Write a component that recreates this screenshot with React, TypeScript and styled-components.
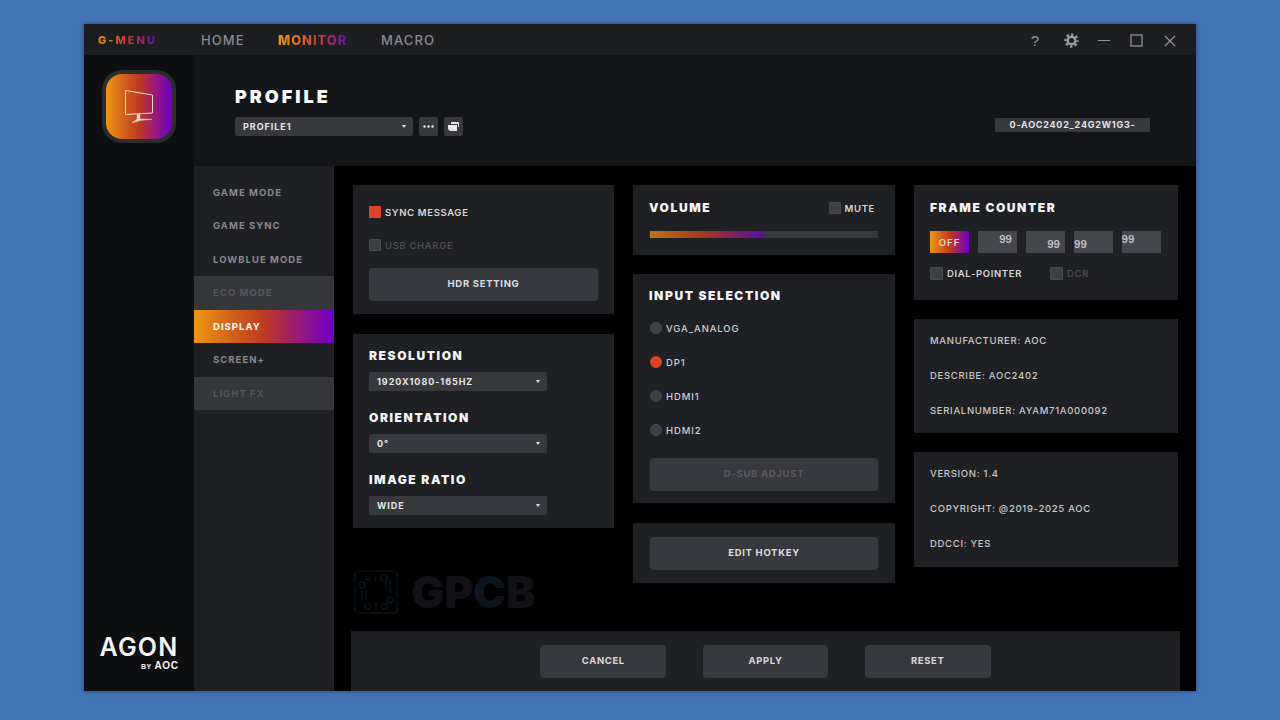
import React from "react";
import styled, { createGlobalStyle } from "styled-components";

const grad = "linear-gradient(90deg,#ee9714 0%,#d0601a 28%,#bf3a20 50%,#98187a 75%,#6c00c8 100%)";
const sans = `"Inter","Open Sans","Liberation Sans",sans-serif`;

const Global = createGlobalStyle`
  html, body { margin: 0; padding: 0; width: 1280px; height: 720px; overflow: hidden; background: #4273b4; }
  * { box-sizing: border-box; }
  body { font-family: ${sans}; }
`;
const Page = styled.div`
  width: 1280px; height: 720px; padding: 24px 84px 29px;
`;
const Window = styled.div`
  width: 1112px; height: 667px; display: flex; flex-direction: column; background: #000;
  box-shadow: 0 0 4px rgba(20,40,80,.6);
`;
const TitleBar = styled.div`
  height: 31px; flex: none; background: #1d1e22; display: flex; align-items: center; padding: 0 10px 0 14px;
`;
const Brand = styled.div`
  font-size: 11px; font-weight: 800; letter-spacing: 2px; width: 103px;
  span { background: linear-gradient(90deg,#e8951a,#c33a30 50%,#6c10b0); -webkit-background-clip: text; background-clip: text; color: transparent; }
`;
const TopLink = styled.div<{ $active?: boolean; $w: number }>`
  width: ${p => p.$w}px; font-size: 13px; letter-spacing: ${p => (p.$active ? 0.9 : 1.1)}px;
  font-weight: ${p => (p.$active ? 800 : 500)};
  color: #8a8b90;
  span { ${p => p.$active && `background: linear-gradient(90deg,#ee9714,#d2602a 40%,#c8402a 55%,#6c10b0); -webkit-background-clip: text; background-clip: text; color: transparent;`} }
`;
const WinIcons = styled.div`
  margin-left: auto; display: flex; align-items: center; color: #9a9ba0; padding-top: 2px;
`;
const WinBtn = styled.div<{ $w: number }>`
  width: ${p => p.$w}px; display: flex; justify-content: center; align-items: center;
`;
const Body = styled.div`
  flex: 1; min-height: 0; display: flex;
`;
const Side = styled.div`
  width: 110px; flex: none; background: #0e0f11; display: flex; flex-direction: column; align-items: center; padding: 15px 0 20px;
`;
const Tile = styled.div`
  width: 74px; height: 73px; border-radius: 20px; background: #2b2c30; padding: 4px;
`;
const TileInner = styled.div`
  width: 66px; height: 65px; border-radius: 16px; background: ${grad}; display: flex; align-items: center; justify-content: center;
`;
const Logo = styled.div`
  margin-top: auto; width: 80px; color: #f4f4f4; display: flex; flex-direction: column; align-items: flex-end; margin-left: 1px;
`;
const LogoMain = styled.div`
  font-family: "Inter", sans-serif; font-size: 25px; line-height: 18px; height: 18px; font-weight: 600; letter-spacing: 1.2px; width: 80px; white-space: nowrap; margin-bottom: 5px;
`;
const LogoSub = styled.div`
  font-family: "Liberation Sans", sans-serif; font-size: 10px; line-height: 10px; height: 10px; font-weight: 700; letter-spacing: .6px; white-space: nowrap; margin-right: 1px;
  small { font-size: 7px; margin-right: 3px; letter-spacing: .4px; }
`;
const Right = styled.div`
  flex: 1; min-width: 0; display: flex; flex-direction: column;
`;
const Header = styled.div`
  height: 111px; flex: none; background: #141518; padding: 32px 46px 0 41px; display: flex; justify-content: space-between;
`;
const HeaderLeft = styled.div`
  display: flex; flex-direction: column;
`;
const PageTitle = styled.div`
  font-size: 18px; line-height: 20px; font-weight: 900; color: #fff; letter-spacing: 3px;
`;
const ProfileRow = styled.div`
  display: flex; gap: 6px; margin-top: 10px;
`;
const Select = styled.div<{ $w: number }>`
  width: ${p => p.$w}px; height: 19px; background: #38393e; border-radius: 2px; display: flex; align-items: center; justify-content: space-between;
  padding: 0 7px 0 8px; font-size: 9px; font-weight: 700; color: #e6e6e8; letter-spacing: .95px;
`;
const Caret = styled.span`
  width: 0; height: 0; border-left: 2.5px solid transparent; border-right: 2.5px solid transparent; border-top: 3.5px solid #e4e4e6;
`;
const SquareBtn = styled.div`
  width: 19px; height: 19px; background: #38393e; border-radius: 2px; display: flex; align-items: center; justify-content: center;
`;
const Monitor = styled.div`
  width: 155px; height: 14px; background: #38393e; border-radius: 1px; margin-top: 31px; text-align: center;
  font-size: 9px; line-height: 14px; font-weight: 700; letter-spacing: .75px; color: #e4e4e6; white-space: nowrap;
`;
const Lower = styled.div`
  flex: 1; min-height: 0; display: flex;
`;
const Nav = styled.div`
  width: 140px; flex: none; background: #1f2024; padding-top: 9.5px; display: flex; flex-direction: column;
`;
const NavItem = styled.div<{ $kind?: "active" | "off" }>`
  height: 33.5px; flex: none; display: flex; align-items: center; padding-left: 19px;
  font-size: 9.5px; font-weight: 700; letter-spacing: 1.04px;
  color: ${p => (p.$kind === "active" ? "#fff" : p.$kind === "off" ? "#55565b" : "#88898e")};
  background: ${p => (p.$kind === "active" ? grad : p.$kind === "off" ? "#36373b" : "transparent")};
`;
const Main = styled.div`
  position: relative; flex: 1; min-width: 0; background: #000; display: flex; flex-direction: column; justify-content: space-between; padding-top: 19px;
`;
const Columns = styled.div`
  display: grid; grid-template-columns: 261px 262px 264px; column-gap: 19px; padding-left: 19px; align-items: start;
`;
const Col = styled.div<{ $gap: number }>`
  display: flex; flex-direction: column; gap: ${p => p.$gap}px;
`;
const Card = styled.div<{ $h: number; $pad?: number }>`
  height: ${p => p.$h}px; background: #1f2024; padding: 0 ${p => p.$pad ?? 16}px; display: flex; flex-direction: column;
`;
const H = styled.div<{ $top?: number; $left?: number }>`
  font-size: 12px; line-height: 14px; font-weight: 900; color: #f4f4f4; letter-spacing: 1.6px; margin-top: ${p => p.$top ?? 0}px; margin-left: ${p => p.$left ?? 0}px; white-space: nowrap;
`;
const Box = styled.span<{ $on?: boolean; $size?: number }>`
  width: ${p => p.$size ?? 12}px; height: ${p => p.$size ?? 12}px; flex: none; border-radius: 1px; background: ${p => (p.$on ? "#dc4327" : "#3f4045")}; border: 1px solid ${p => (p.$on ? "#dc4327" : "#4a4b50")};
`;
const Check = styled.div<{ $off?: boolean; $top?: number; $gap?: number; $right?: number }>`
  display: flex; align-items: center; gap: ${p => p.$gap ?? 4}px; margin-top: ${p => p.$top ?? 0}px; margin-right: ${p => p.$right ?? 0}px; height: 14px;
  font-size: 9.5px; font-weight: 600; letter-spacing: .65px; white-space: nowrap; color: ${p => (p.$off ? "#4b4c51" : "#d8d8da")};
`;
const Btn = styled.div<{ $off?: boolean; $top?: number }>`
  height: 33px; flex: none; border-radius: 4px; background: #38393e; margin-top: ${p => p.$top ?? 0}px; display: flex; align-items: center; justify-content: center; padding-bottom: 2px;
  font-size: 9.5px; font-weight: 700; letter-spacing: .7px; color: ${p => (p.$off ? "#5a5b60" : "#dcdcde")};
`;
const VolumeHead = styled.div`
  display: flex; justify-content: space-between; align-items: center; margin-top: 16px;
`;
const Track = styled.div`
  height: 7px; background: #38393e; margin-top: 16px; display: flex;
`;
const Fill = styled.div`
  height: 100%; background: linear-gradient(90deg,#b8761a,#a0341f 50%,#5c0aa8);
`;
const Radio = styled.div<{ $top?: number }>`
  display: flex; align-items: center; gap: 4px; height: 14px; margin-top: ${p => p.$top ?? 0}px;
  font-size: 9.5px; font-weight: 500; letter-spacing: .9px; color: #d0d0d2;
`;
const Dot = styled.span<{ $on?: boolean }>`
  width: 12px; height: 12px; border-radius: 50%; flex: none; background: ${p => (p.$on ? "#dc4327" : "#3f4045")}; border: 1px solid ${p => (p.$on ? "#dc4327" : "#4c4d52")};
`;
const CounterRow = styled.div`
  display: grid; grid-template-columns: 39px 39px 39px 38.5px 39px; column-gap: 9px; margin-top: 16px;
`;
const OffChip = styled.div`
  height: 22px; background: linear-gradient(90deg,#ee9714,#c33a20 50%,#6c00c8); display: flex; align-items: center; justify-content: center;
  font-size: 9.5px; font-weight: 500; letter-spacing: 1px; color: #f4e6d8;
`;
const Count = styled.div<{ $low?: boolean; $end?: boolean }>`
  height: 22px; background: #46474c; display: flex; justify-content: ${p => (p.$end ? "flex-end" : "flex-start")}; align-items: ${p => (p.$low ? "flex-end" : "flex-start")};
  padding: ${p => (p.$low ? "0 5px 3px" : "3px 5px 0")};
  ${p => !p.$end && "padding-left: 0;"}
  font-size: 10px; font-weight: 600; line-height: 11px; color: #c8c8cc;
`;
const CheckRow = styled.div`
  display: flex; margin-top: 13px; gap: 28px;
`;
const Info = styled.div<{ $top: number }>`
  font-size: 9.5px; line-height: 14px; font-weight: 500; letter-spacing: .7px; color: #c8c8ca; margin-top: ${p => p.$top}px; white-space: nowrap;
`;
const Mark = styled.div`
  position: absolute; left: 20px; top: 404px; display: flex; align-items: center; gap: 13px; color: #101215;
  font-family: "Inter", sans-serif; font-size: 44px; font-weight: 900; line-height: 44px;
  span { color: #0a1520; }
`;
const Footer = styled.div`
  height: 60px; flex: none; margin: 0 16px 0 17px; background: #1f2024; display: flex; align-items: center; justify-content: center; gap: 36.5px;
`;
const FootBtn = styled.div`
  width: 125.7px; height: 33px; border-radius: 4px; background: #38393e; display: flex; align-items: center; justify-content: center; padding-bottom: 2px;
  font-size: 9.5px; font-weight: 700; letter-spacing: .62px; color: #d8d8da;
`;
const Help = styled.span`
  font-family: "Liberation Sans", sans-serif; font-size: 15px; color: #9a9ba0; line-height: 1;
`;
const FieldSelect = styled(Select)`
  margin-top: 9px;
`;

const Field = ({ title, value, top }: { title: string; value: string; top: number }) => (
  <>
    <H $top={top}>{title}</H>
    <FieldSelect $w={178}>{value}<Caret /></FieldSelect>
  </>
);

export default function App() {
  return (
    <Page>
      <Global />
      <Window>
        <TitleBar>
          <Brand><span>G-MENU</span></Brand>
          <TopLink $w={77}><span>HOME</span></TopLink>
          <TopLink $w={103} $active><span>MONITOR</span></TopLink>
          <TopLink $w={70}><span>MACRO</span></TopLink>
          <WinIcons>
            <WinBtn $w={36}><Help>?</Help></WinBtn>
            <WinBtn $w={36}>
              <svg width="15" height="15" viewBox="0 0 24 24" fill="none" stroke="currentColor"><circle cx="12" cy="12" r="6" strokeWidth="4"/><circle cx="12" cy="12" r="9.5" strokeWidth="4" strokeDasharray="3.9 3.56" strokeDashoffset="1.95"/></svg>
            </WinBtn>
            <WinBtn $w={30}><svg width="14" height="14" viewBox="0 0 14 14" stroke="currentColor" strokeWidth="1"><path d="M1 6.5h12"/></svg></WinBtn>
            <WinBtn $w={35}><svg width="13" height="13" viewBox="0 0 13 13" fill="none" stroke="currentColor" strokeWidth="1.2"><rect x="1" y="1" width="11" height="11"/></svg></WinBtn>
            <WinBtn $w={32}><svg width="12" height="12" viewBox="0 0 12 12" stroke="currentColor" strokeWidth="1.1"><path d="M1 1l10 10M11 1L1 11"/></svg></WinBtn>
          </WinIcons>
        </TitleBar>
        <Body>
          <Side>
            <Tile>
              <TileInner>
                <svg width="28" height="33" viewBox="0 0 28 33" fill="none" stroke="#f6d8c4" strokeWidth="1"><path d="M.5.5L27.5 5V23L.5 24.5z"/><path d="M12 24.5h3v4.5l12 .3-12 1.2-8 2.5 5-4z" fill="#f6d8c4" strokeWidth=".4"/></svg>
              </TileInner>
            </Tile>
            <Logo>
              <LogoMain>AGON</LogoMain>
              <LogoSub><small>BY</small>AOC</LogoSub>
            </Logo>
          </Side>
          <Right>
            <Header>
              <HeaderLeft>
                <PageTitle>PROFILE</PageTitle>
                <ProfileRow>
                  <Select $w={178}>PROFILE1<Caret /></Select>
                  <SquareBtn>
                    <svg width="11" height="3" viewBox="0 0 11 3" fill="#e8e8ea"><circle cx="1.5" cy="1.5" r="1.2"/><circle cx="5.5" cy="1.5" r="1.2"/><circle cx="9.5" cy="1.5" r="1.2"/></svg>
                  </SquareBtn>
                  <SquareBtn>
                    <svg width="11" height="9" viewBox="0 0 11 9" fill="#e8e8ea"><path d="M3 0h8v5h-1V2H3z"/><path d="M0 3h9v6H2L0 7z"/></svg>
                  </SquareBtn>
                </ProfileRow>
              </HeaderLeft>
              <Monitor>0-AOC2402_24G2W1G3-</Monitor>
            </Header>
            <Lower>
              <Nav>
                <NavItem>GAME MODE</NavItem>
                <NavItem>GAME SYNC</NavItem>
                <NavItem>LOWBLUE MODE</NavItem>
                <NavItem $kind="off">ECO MODE</NavItem>
                <NavItem $kind="active">DISPLAY</NavItem>
                <NavItem>SCREEN+</NavItem>
                <NavItem $kind="off">LIGHT FX</NavItem>
              </Nav>
              <Main>
                <Columns>
                  <Col $gap={20}>
                    <Card $h={129}>
                      <Check $top={20}><Box $on />SYNC MESSAGE</Check>
                      <Check $top={19} $off><Box />USB CHARGE</Check>
                      <Btn $top={16}>HDR SETTING</Btn>
                    </Card>
                    <Card $h={194}>
                      <Field title="RESOLUTION" value="1920X1080-165HZ" top={15} />
                      <Field title="ORIENTATION" value="0°" top={20} />
                      <Field title="IMAGE RATIO" value="WIDE" top={20} />
                    </Card>
                  </Col>
                  <Col $gap={19.5}>
                    <Card $h={69.5} $pad={17}>
                      <VolumeHead>
                        <H $left={-1}>VOLUME</H>
                        <Check $gap={4} $right={3}><Box />MUTE</Check>
                      </VolumeHead>
                      <Track><Fill style={{ width: "50%" }} /></Track>
                    </Card>
                    <Card $h={229} $pad={17}>
                      <H $top={15} $left={-1}>INPUT SELECTION</H>
                      <Radio $top={18}><Dot />VGA_ANALOG</Radio>
                      <Radio $top={20}><Dot $on />DP1</Radio>
                      <Radio $top={20}><Dot />HDMI1</Radio>
                      <Radio $top={20}><Dot />HDMI2</Radio>
                      <Btn $top={21} $off>D-SUB ADJUST</Btn>
                    </Card>
                    <Card $h={60} $pad={17}>
                      <Btn $top={14}>EDIT HOTKEY</Btn>
                    </Card>
                  </Col>
                  <Col $gap={19}>
                    <Card $h={115}>
                      <H $top={16}>FRAME COUNTER</H>
                      <CounterRow>
                        <OffChip>OFF</OffChip>
                        <Count $end>99</Count>
                        <Count $end $low>99</Count>
                        <Count $low>99</Count>
                        <Count>99</Count>
                      </CounterRow>
                      <CheckRow>
                        <Check $gap={4}><Box $size={13} />DIAL-POINTER</Check>
                        <Check $gap={4} $off><Box $size={13} />DCR</Check>
                      </CheckRow>
                    </Card>
                    <Card $h={114}>
                      <Info $top={15}>MANUFACTURER: AOC</Info>
                      <Info $top={21}>DESCRIBE: AOC2402</Info>
                      <Info $top={21}>SERIALNUMBER: AYAM71A000092</Info>
                    </Card>
                    <Card $h={115}>
                      <Info $top={15}>VERSION: 1.4</Info>
                      <Info $top={21}>COPYRIGHT: @2019-2025 AOC</Info>
                      <Info $top={21}>DDCCI: YES</Info>
                    </Card>
                  </Col>
                </Columns>
                <Mark>
                  <svg width="44" height="44" viewBox="0 0 44 44" fill="none" stroke="#0b1620" strokeWidth="1.2"><rect x="1" y="1" width="42" height="42" rx="3"/><circle cx="30" cy="8" r="3"/><circle cx="14" cy="8" r="2"/><circle cx="8" cy="15" r="3"/><circle cx="36" cy="30" r="3"/><circle cx="14" cy="36" r="3"/><circle cx="30" cy="36" r="3"/><path d="M8 21v10M36 10v12M21 5v7M22 32v8M12 21v8M32 12v8"/></svg>
                  <div>GP<span>C</span>B</div>
                </Mark>
                <Footer>
                  <FootBtn>CANCEL</FootBtn>
                  <FootBtn>APPLY</FootBtn>
                  <FootBtn>RESET</FootBtn>
                </Footer>
              </Main>
            </Lower>
          </Right>
        </Body>
      </Window>
    </Page>
  );
}
